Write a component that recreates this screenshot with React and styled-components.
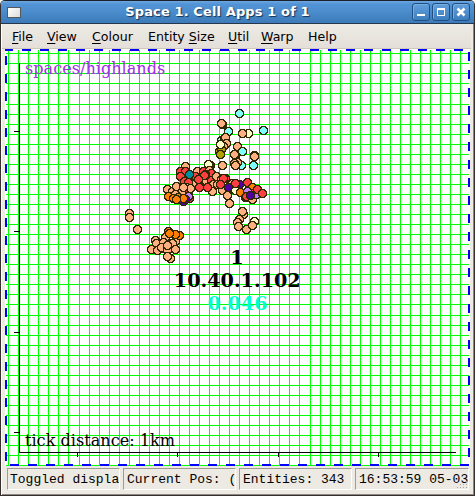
import React from "react";
import styled, { createGlobalStyle } from "styled-components";

const GlobalStyle = createGlobalStyle`
  *{ box-sizing: border-box; }
  body { margin: 0; background: #fff; }
`;

const Window = styled.div`
  width: 475px;
  height: 496px;
  display: flex;
  flex-direction: column;
  overflow: hidden;
  background: #ede9e3;
  border: 1px solid #362f2d;
  border-top-color: #1c2028;
  border-radius: 5px 5px 0 0;
  box-shadow: inset 1px 0 #fff, inset -1px -1px #8d8781;
  font-family: "DejaVu Sans", sans-serif;
`;

const TitleBar = styled.header`
  flex: none;
  height: 23px;
  display: flex;
  align-items: center;
  padding: 0 4px 0 6px;
  border-bottom: 1px solid #25374d;
  background: linear-gradient(#6ea8e0 0, #5294d6 3px, #4a8ccc 50%, #3d7ab8 100%);
`;

const WindowIcon = styled.span`
  width: 14px;
  height: 11px;
  border: 1px solid #54595e;
  background: linear-gradient(135deg, #fff, #dcdcdc);
`;

const Title = styled.h1`
  flex: 1;
  margin: 0;
  padding-left: 2px;
  text-align: center;
  color: #fff;
  font-size: 13px;
  letter-spacing: 0.12px;
  line-height: 24px;
  white-space: nowrap;
  text-shadow: 1px 1px 1px #143253;
`;

const Controls = styled.div`
  display: flex;
  gap: 2px;
`;

const ControlButton = styled.button`
  width: 18px;
  height: 18px;
  padding: 0;
  display: grid;
  place-items: center;
  border: 1px solid #214f80;
  border-radius: 3px;
  background: linear-gradient(#62a0dc, #3e7ebf);
  box-shadow: inset 1px 1px #76ade2;
`;

const MenuBar = styled.nav`
  flex: none;
  height: 25px;
  margin: 0 3px 0 1px;
  padding-left: 10px;
  display: grid;
  grid-template-columns: 35px 45px 56px 80px 33px 47px 1fr;
  background: linear-gradient(#eeeae5, #e4dfd8);
  border-bottom: 1px solid #cdc6bb;
  color: #000;
  font-size: 12.6px;
  line-height: 25px;
`;

const MenuItem = styled.span`
  white-space: nowrap;
  u { text-underline-offset: 2px; text-decoration-thickness: 1px; }
`;

const Plot = styled.svg`
  flex: none;
  display: block;
  width: 465px;
  height: 417px;
  margin-left: 4px;
  background: #fff;
`;

const PlotText = styled.text`
  font-family: "DejaVu Serif", serif;
  font-size: ${(p) => p.$size}px;
  font-weight: ${(p) => (p.$bold ? 700 : 400)};
  fill: ${(p) => p.$color};
  text-anchor: ${(p) => (p.$bold ? "middle" : "start")};
`;

const StatusBar = styled.footer`
  flex: none;
  height: 26px;
  padding: 2px 5px 2px 6px;
  display: grid;
  grid-template-columns: 113px 113px 113px 114px;
  column-gap: 3px;
  position: relative;
`;

const StatusCell = styled.div`
  overflow: hidden;
  height: 22px;
  padding-left: 3px;
  border: 1px solid #fff;
  border-top-color: #9f9a93;
  border-left-color: #9f9a93;
  font: 13px/21px "Liberation Mono", monospace;
  white-space: pre;
  color: #000;

  &:first-child { padding-left: 2px; }
`;

const Grip = styled.svg`
  position: absolute;
  right: 6px;
  bottom: 4px;
`;

const MENUS = [
  ["", "F", "ile"],
  ["", "V", "iew"],
  ["", "C", "olour"],
  ["Entity ", "S", "ize"],
  ["", "U", "til"],
  ["", "W", "arp"],
  ["Help", "", ""],
];

const STATUS = ["Toggled displa", "Current Pos: (", "Entities: 343", "16:53:59 05-03"];

const COLUMNS = Array.from({ length: 46 }, (_, i) => Math.floor(8.72 + i * 10.044));
const ROWS = Array.from({ length: 42 }, (_, i) => Math.floor(53.81 + i * 10.046));

const PEACH = "#ffb080";
const RED = "#ff4040";
const CYAN = "#80ffff";
const CREAM = "#ffffc8";
const ORANGE = "#ff8000";
const INDIGO = "#5000a0";
const OLIVE = "#b0a000";
const TEAL = "#0090a0";
const LILAC = "#c080ff";

const ENTITIES = [
  [239, 113, CYAN], [222, 124, PEACH], [221, 123, PEACH], [263, 130, CYAN],
  [228, 131, CYAN], [248, 133, CREAM], [242, 133, PEACH], [221, 140, CYAN],
  [224, 139, PEACH], [225, 137, PEACH], [226, 143, PEACH], [223, 146, PEACH],
  [219, 151, OLIVE], [221, 149, OLIVE], [220, 144, CREAM], [220, 154, OLIVE],
  [237, 146, PEACH], [242, 151, CYAN], [235, 155, PEACH], [234, 154, PEACH],
  [254, 155, PEACH], [254, 156, PEACH], [253, 165, CYAN], [241, 165, CYAN],
  [237, 162, PEACH], [234, 163, PEACH], [235, 165, PEACH], [222, 165, PEACH],
  [210, 165, INDIGO], [208, 164, CREAM],
  [185, 166, PEACH], [180, 171, RED], [185, 171, RED], [180, 176, RED],
  [192, 182, RED], [188, 178, PEACH], [197, 171, PEACH], [203, 171, RED],
  [209, 170, PEACH], [211, 173, RED], [195, 176, RED], [201, 178, PEACH],
  [205, 174, RED], [190, 184, PEACH], [195, 183, PEACH], [199, 187, RED],
  [184, 181, RED], [188, 182, RED], [203, 179, RED], [206, 181, PEACH],
  [211, 180, RED], [204, 175, RED], [198, 179, RED], [189, 174, TEAL],
  [216, 176, PEACH], [213, 184, PEACH], [212, 191, PEACH], [207, 187, RED],
  [221, 179, PEACH], [225, 178, RED], [217, 184, PEACH], [223, 178, RED],
  [222, 190, PEACH], [220, 184, RED], [239, 184, INDIGO], [232, 183, PEACH],
  [228, 187, INDIGO], [235, 190, CREAM], [235, 183, RED],
  [247, 182, RED], [252, 187, ORANGE], [252, 193, RED], [243, 193, PEACH],
  [240, 192, ORANGE], [245, 197, PEACH], [252, 199, PEACH], [256, 194, LILAC],
  [247, 191, LILAC], [246, 196, RED], [257, 189, RED], [262, 193, RED],
  [250, 195, INDIGO],
  [227, 195, PEACH], [229, 203, PEACH],
  [186, 187, PEACH], [188, 193, RED], [189, 198, RED], [188, 196, LILAC],
  [183, 201, INDIGO], [185, 199, INDIGO], [167, 189, PEACH], [172, 191, PEACH], [176, 186, PEACH],
  [181, 192, PEACH], [190, 188, PEACH], [183, 187, PEACH], [175, 194, PEACH],
  [168, 196, ORANGE], [173, 198, ORANGE], [178, 197, ORANGE], [183, 198, ORANGE], [176, 199, ORANGE],
  [243, 214, PEACH], [242, 211, PEACH], [239, 219, PEACH], [237, 222, PEACH],
  [238, 226, PEACH], [254, 221, CREAM], [246, 229, PEACH], [252, 225, PEACH],
  [129, 213, PEACH], [129, 217, PEACH], [137, 229, PEACH],
  [171, 247, PEACH], [165, 237, PEACH], [175, 241, PEACH], [172, 243, PEACH],
  [155, 240, PEACH], [156, 243, PEACH],
  [151, 249, PEACH], [163, 248, PEACH], [157, 250, PEACH], [163, 242, PEACH],
  [175, 249, PEACH], [161, 247, PEACH], [167, 250, PEACH], [167, 245, PEACH],
  [170, 258, PEACH], [167, 256, PEACH], [168, 231, ORANGE], [179, 235, ORANGE], [175, 234, ORANGE],
  [169, 233, ORANGE],
];

function App() {
  return (
    <>
      <GlobalStyle />
      <Window>
        <TitleBar>
          <WindowIcon />
          <Title>Space 1. Cell Apps 1 of 1</Title>
          <Controls>
            <ControlButton aria-label="Minimise">
              <svg width="12" height="12"><path d="M2 8h8v2H2z" fill="#fff" /></svg>
            </ControlButton>
            <ControlButton aria-label="Maximise">
              <svg width="12" height="12" shapeRendering="crispEdges">
                <path d="M2 3.5h8M2.5 3v7M9.5 3v7M2 9.5h8M2 2.5h8" stroke="#fff" />
              </svg>
            </ControlButton>
            <ControlButton aria-label="Close">
              <svg width="12" height="12"><path d="M2.5 2.5l7 7M9.5 2.5l-7 7" stroke="#fff" strokeWidth="2.6" /></svg>
            </ControlButton>
          </Controls>
        </TitleBar>
        <MenuBar>
          {MENUS.map(([before, key, after]) => (
            <MenuItem key={before + key}>{before}<u>{key}</u>{after}</MenuItem>
          ))}
        </MenuBar>
        <Plot viewBox="5 49 465 417">
          <g shapeRendering="crispEdges" fill="none">
            <path
              d={COLUMNS.map((x) => `M${x + 0.5} 50V466`).join("") + ROWS.map((y) => `M6 ${y + 0.5}H469`).join("")}
              stroke="#00ff00"
            />
            <path
              d="M19.5 63V452.5H456M14 131.5h5M14 231.5h5M14 332.5h5M14 432.5h5M77.5 453v4M177.5 453v4M278.5 453v4M378.5 453v4"
              stroke="#000"
            />
            <g stroke="#0000ff" strokeWidth="2" strokeDasharray="9 9">
              <path d="M4 50H470" />
              <path d="M6 56V466" />
              <path d="M469 52V466" />
              <path d="M10 465H470" />
            </g>
          </g>
          <g shapeRendering="crispEdges" stroke="#302800" strokeWidth="1.4">
            {ENTITIES.map(([x, y, color], i) => (
              <circle key={i} cx={x + 0.5} cy={y + 0.5} r="4.1" fill={color} />
            ))}
          </g>
          <PlotText x="25" y="74" $size={16.1} $color="#a030e8">spaces/highlands</PlotText>
          <PlotText x="25" y="446" $size={16.1} $color="#000">tick distance: 1km</PlotText>
          <PlotText x="237" y="264" $size={19.2} $bold $color="#000">1</PlotText>
          <PlotText x="237.3" y="287" $size={19.2} $bold $color="#000">10.40.1.102</PlotText>
          <PlotText x="237.5" y="310" $size={19.2} $bold $color="#00ffd0">0.046</PlotText>
        </Plot>
        <StatusBar>
          {STATUS.map((text) => <StatusCell key={text}>{text}</StatusCell>)}
          <Grip width="11" height="11" shapeRendering="crispEdges">
            <path d="M9 1h1M6 4h4M3 7h7M0 10h11" stroke="#aaa49b" strokeDasharray="1 2" />
          </Grip>
        </StatusBar>
      </Window>
    </>
  );
}

export default App;
